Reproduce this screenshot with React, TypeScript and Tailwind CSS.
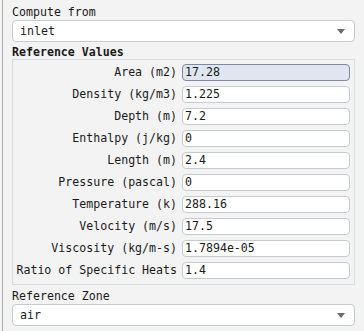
import { FC } from 'react';

interface IField {
  label: string;
  value: string;
  active?: boolean;
}

const fields: Array<IField> = [
  { label: 'Area (m2)', value: '17.28', active: true },
  { label: 'Density (kg/m3)', value: '1.225' },
  { label: 'Depth (m)', value: '7.2' },
  { label: 'Enthalpy (j/kg)', value: '0' },
  { label: 'Length (m)', value: '2.4' },
  { label: 'Pressure (pascal)', value: '0' },
  { label: 'Temperature (k)', value: '288.16' },
  { label: 'Velocity (m/s)', value: '17.5' },
  { label: 'Viscosity (kg/m-s)', value: '1.7894e-05' },
  { label: 'Ratio of Specific Heats', value: '1.4' },
];

const Select: FC<{ value: string }> = ({ value }) => (
  <div className="flex items-center h-[22px] pl-[7px] pr-[9px] bg-white border border-[#c6cad3] rounded-[4px]">
    <span className="flex-1 leading-[20px]">{value}</span>
    <svg width="8" height="5" viewBox="0 0 8 5">
      <path d="M0 0 H8 L4 5 Z" fill="#6b6b6b" />
    </svg>
  </div>
);

const App: FC = () => {
  return (
    <div
      className="w-[364px] h-[331px] bg-[#f3f3f3] text-[#1a1a1a] text-[11.6px]"
      style={{ fontFamily: '"DejaVu Sans Mono", "Liberation Mono", monospace' }}
    >
      <div className="ml-[2px] h-full border-l border-[#a9a9a9] pl-[9px] pr-[9px] pt-[4px]">
        <p className="leading-[16px]">Compute from</p>
        <Select value="inlet" />

        <p className="mt-[3px] leading-[14px] font-bold">Reference Values</p>
        <div className="flex flex-col gap-[5px] border border-[#d6dbe6] pt-[4px] pb-[5px] pr-[4px]">
          {fields.map((f) => (
            <div key={f.label} className="flex items-center gap-[5px] h-[17px]">
              <span className="w-[164px] shrink-0 text-right whitespace-nowrap overflow-hidden leading-[17px]">
                {f.label}
              </span>
              <div
                className={
                  f.active
                    ? 'flex-1 h-[17px] pl-[2px] leading-[15px] bg-[#dfe6ef] border border-[#7b8aa0] rounded-[4px]'
                    : 'flex-1 h-[17px] pl-[2px] leading-[15px] bg-white border border-[#c6cad3] rounded-[4px]'
                }
              >
                {f.value}
              </div>
            </div>
          ))}
        </div>

        <p className="mt-[3px] leading-[16px]">Reference Zone</p>
        <Select value="air" />
      </div>
    </div>
  );
};

export default App;
